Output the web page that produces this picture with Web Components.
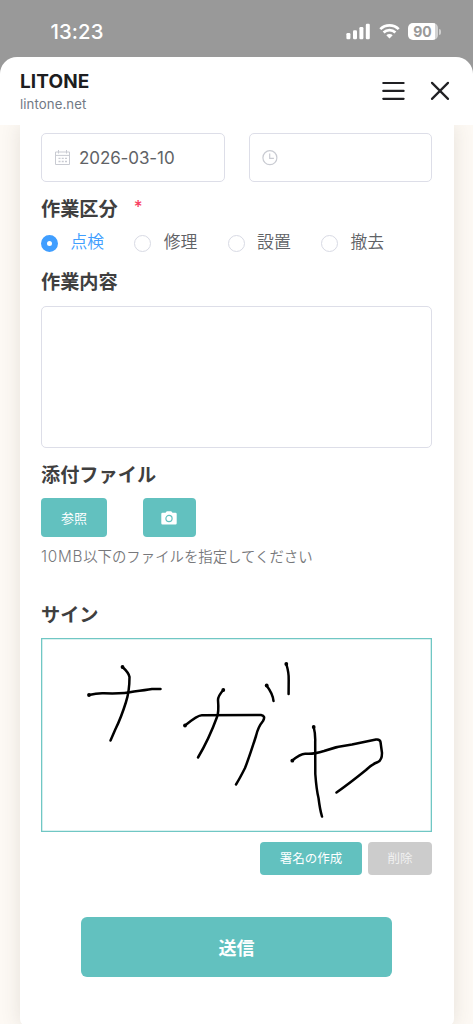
<!DOCTYPE html>
<html lang="ja">
<head>
<meta charset="utf-8">
<title>LITONE</title>
<style>
html,body{margin:0;height:100%;overflow:hidden}
body{background:#999;font-family:Inter,"Noto Sans CJK JP",sans-serif;color:#606266}
</style>
</head>
<body>
<app-screen></app-screen>
<script>
const define = (name, html) => {
  const t = document.createElement('template');
  t.innerHTML = '<style>*{box-sizing:border-box}svg{display:block}</style>' + html;
  customElements.define(name, class extends HTMLElement {
    constructor() {
      super();
      this.attachShadow({mode: 'open'}).appendChild(t.content.cloneNode(true));
    }
  });
};

define('status-bar', `
<style>
:host{display:flex;height:57px;padding:6px 32px 0 50.500px;align-items:center;justify-content:space-between;color:#fff}
.time{font-size:20.300px;font-weight:500;line-height:24px;letter-spacing:.1px;padding-top:1px}
.right{display:flex;align-items:center;gap:8px}
.bat{display:flex;align-items:center}
.level{width:30px;height:17px;border-radius:5px;background:linear-gradient(90deg,#fff 27px,#d2d2d2 27px);color:#999;font-size:14px;font-weight:700;line-height:17px;text-align:center;padding-right:1px}
.tip{width:2px;height:6px;margin-left:1px;border-radius:0 2px 2px 0;background:#cfcfcf}
</style>
<span class="time">13:23</span>
<div class="right">
<svg width="25" height="17" viewBox="0 0 25 17" fill="#fff"><rect x=".4" y="10" width="4" height="6.2" rx="1.2"/><rect x="7" y="7.2" width="4" height="9" rx="1.2"/><rect x="13.400" y="4" width="4" height="12.200" rx="1.2"/><rect x="19.800" y=".8" width="4" height="15.400" rx="1.2"/></svg>
<svg width="21" height="17" viewBox="0 0 21 17" fill="none" stroke="#fff" stroke-width="2.700"><path d="M1.300 6.100a13.200 13.200 0 0 1 18.400 0"/><path d="M4.600 9.500a8.400 8.400 0 0 1 11.800 0"/><path d="M7.300 12.200a4.600 4.600 0 0 1 6.400 0L10.500 15.600Z" fill="#fff" stroke="none"/></svg>
<div class="bat"><div class="level">90</div><div class="tip"></div></div>
</div>`);

define('sheet-header', `
<style>
:host{display:flex;height:68px;background:#fff;border-radius:17px 17px 0 0;padding:0 23.500px 0 20px;justify-content:space-between;flex:none}
.title{margin-top:13px;font-size:19px;font-weight:650;line-height:24px;color:#1d1d20;letter-spacing:.1px}
.host{font-size:13.200px;line-height:18px;color:#717985;letter-spacing:.1px;margin-top:1px}
.icons{display:flex;gap:25px;margin-top:22px}
</style>
<div><div class="title"><slot></slot></div><div class="host"><slot name="host"></slot></div></div>
<div class="icons">
<svg width="23" height="24" viewBox="0 0 23 24" fill="none" stroke="#202023" stroke-width="2.200" stroke-linecap="round"><path d="M1.300 4h20.300M1.300 11.900h20.300M1.300 19.800h20.300"/></svg>
<svg width="20" height="24" viewBox="0 0 20 24" fill="none" stroke="#202023" stroke-width="2.200" stroke-linecap="round"><path d="M2 3.900 18 19.900M18 3.900 2 19.900"/></svg>
</div>`);

define('form-input', `
<style>
:host{display:flex;align-items:center;width:183.500px;height:49px;border:1px solid #dddee8;border-radius:5px;padding-left:11px;font-size:17px;line-height:24px;background:#fff;gap:7px;letter-spacing:-.1px}
::slotted(svg){flex:none;display:block}
</style>
<slot name="icon"></slot><slot></slot>`);

define('form-heading', `
<style>
:host{display:flex;height:28px;line-height:28px;font-size:19.200px;font-weight:700;color:#3f3f3f;font-family:"Noto Sans CJK JP",sans-serif}
.req{display:none;color:#f83f62;font:500 17px/26px Inter,sans-serif;margin-left:16px}
:host([required]) .req{display:block}
</style>
<slot></slot><span class="req">*</span>`);

define('form-radio', `
<style>
:host{display:flex;width:93.300px;height:28px;font-size:16.800px;line-height:28px;color:#606266;font-family:"Noto Sans CJK JP",sans-serif;font-weight:350}
i{width:17px;height:17px;flex:none;border:1px solid #d8dae4;border-radius:50%;margin:8px 12.500px 0 0;background:#fff}
:host([checked]){color:#409eff}
:host([checked]) i{border:6px solid #409eff}
</style>
<i></i><slot></slot>`);

define('form-button', `
<style>
:host{display:flex;align-items:center;justify-content:center;background:#62c1bf;color:#fff;border-radius:4px;font-family:"Noto Sans CJK JP",sans-serif;font-size:13px;line-height:20px}
:host([muted]){background:#ccc;color:#f1f1f1}
</style>
<slot></slot>`);

define('sign-pad', `
<style>
:host{display:block;height:194px;background:#fff;box-shadow:inset 0 0 0 1.300px #70c7c4}
</style>
<svg width="391" height="194" viewBox="41 638 391 194" fill="none" stroke="#000" stroke-width="2.500" stroke-linecap="round" stroke-linejoin="round">
<path d="M122.500 667Q129 673 129.500 677Q129.500 691 126 702Q121 718 115.500 729L110.500 740.500"/>
<path d="M89 695Q97 693 104 693.300Q124 694 134 691.500Q146 690 152 689L160.500 689"/>
<path d="M223.300 690Q218 696 218 700Q219 712 217 717Q209 739 198 757.500"/>
<path d="M185 725.500Q198 715 202 715.300L261 715Q266 716 263 721Q258 727 256 736Q249 758 245 768Q240 778 236 784.500"/>
<path d="M266.700 685.700Q273 694 273.500 701M286.300 664Q289 673 288.700 680L288.600 694"/>
<path d="M313.700 727Q315.500 734 315.200 742L315.300 774Q316.500 790 318.500 798Q320 810 322 816.500"/>
<path d="M292.300 760.500Q301 753 306 753.700Q313 754.500 324 751Q338 746 352 744.500L376 739.500Q380 739 380.500 742L382 753Q382 760 378 762Q372 764 366 770Q350 783 336.500 792.500"/>
<g fill="#000" stroke="none"><circle cx="122.500" cy="667" r="1.900"/><circle cx="89" cy="695" r="1.900"/><circle cx="223.300" cy="690" r="1.900"/><circle cx="185" cy="725.500" r="1.900"/><circle cx="266.700" cy="685.500" r="1.900"/><circle cx="286.300" cy="664" r="1.900"/><circle cx="313.700" cy="727" r="1.900"/><circle cx="292.300" cy="760.700" r="1.900"/></g>
</svg>`);

define('app-screen', `
<style>
:host{display:flex;flex-direction:column;width:473px;height:1024px;overflow:hidden;background:#999}
main{flex:1;overflow:hidden;background:#fdf9f4;padding:0 19px 0 19.500px}
.card{height:901px;background:#fff;border-radius:0 0 7px 7px;box-shadow:0 0 20px rgba(70,60,50,.13);padding:8px 22px 0 21.500px}
.row{display:flex}
.between{justify-content:space-between}
.area{height:142px;border:1px solid #dddee8;border-radius:5px;margin-top:10px}
.note{height:22px;line-height:22px;font-size:14.400px;color:#77787b;margin-top:8px;font-family:"Noto Sans CJK JP",sans-serif;font-weight:350;white-space:nowrap}
.note span{letter-spacing:.75px;font-size:15.300px;font-family:Inter,sans-serif;font-weight:300}
</style>
<status-bar></status-bar>
<sheet-header>LITONE<span slot="host">lintone.net</span></sheet-header>
<main><div class="card">
<div class="row between">
<form-input><svg slot="icon" width="19" height="17" viewBox="0 0 19 17" fill="none" stroke="#c9cbd2"><path d="M2.500 3h14v12.500h-14zM2.500 6.400h14M5.500 1v3.500M13.500 1v3.500"/><path d="M5.500 9.300h8.500M5.500 12.500h8.500" stroke-width="1.300" stroke-dasharray="2 1.250"/></svg>2026-03-10</form-input>
<form-input><svg slot="icon" width="17" height="17" viewBox="0 0 17 17" fill="none" stroke="#c9cbd2" stroke-width="1.200"><circle cx="8.900" cy="8.700" r="7"/><path d="M8.700 4.500v4.800h4.200"/></svg></form-input>
</div>
<form-heading required style="margin-top:12px">作業区分</form-heading>
<div class="row" style="margin-top:5px"><form-radio checked>点検</form-radio><form-radio>修理</form-radio><form-radio>設置</form-radio><form-radio>撤去</form-radio></div>
<form-heading style="margin-top:12px">作業内容</form-heading>
<div class="area" style="margin-top:11px"></div>
<form-heading style="margin-top:12px">添付ファイル</form-heading>
<div class="row" style="margin-top:10px;gap:35.500px">
<form-button style="width:66px;height:39px">参照</form-button>
<form-button style="width:53.500px;height:39px"><svg width="16" height="14" viewBox="0 0 16 14"><path fill="#fff" d="M1.500 1.700h3L5.800.3h4.400l1.300 1.400h3q1.200 0 1.200 1.200v9.300q0 1.200-1.200 1.200h-13q-1.200 0-1.200-1.200V2.900q0-1.200 1.200-1.200Z"/><circle cx="8" cy="7.500" r="3.100" fill="none" stroke="#62c1bf" stroke-width="1.200"/></svg></form-button>
</div>
<div class="note"><span>10MB</span>以下のファイルを指定してください</div>
<form-heading style="margin-top:33px">サイン</form-heading>
<sign-pad style="margin-top:10px"></sign-pad>
<div class="row" style="justify-content:flex-end;gap:6px;margin-top:10px">
<form-button style="width:102px;height:32.500px;font-size:12.500px">署名の作成</form-button>
<form-button muted style="width:64px;height:32.500px;font-size:12.500px">削除</form-button>
</div>
<form-button style="width:311.500px;height:60.500px;margin:42px auto 0;border-radius:6px;font-size:18px;font-weight:700">送信</form-button>
</div></main>`);
</script>
</body>
</html>
